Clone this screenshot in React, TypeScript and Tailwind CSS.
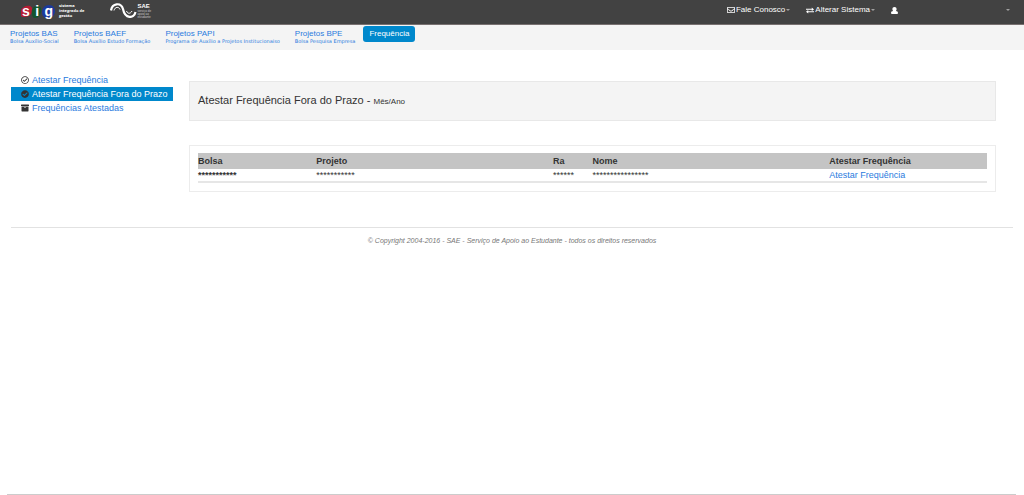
import { FaArchive, FaCheckCircle, FaRegCheckCircle, FaRegEnvelope } from "react-icons/fa";

const projects = [
  { title: "Projetos BAS", subtitle: "Bolsa Auxílio-Social" },
  { title: "Projetos BAEF", subtitle: "Bolsa Auxílio Estudo Formação" },
  { title: "Projetos PAPI", subtitle: "Programa de Auxílio a Projetos Institucionaiso" },
  { title: "Projetos BPE", subtitle: "Bolsa Pesquisa Empresa" },
];

const menu = [
  { label: "Atestar Frequência", icon: FaRegCheckCircle, active: false },
  { label: "Atestar Frequência Fora do Prazo", icon: FaCheckCircle, active: true },
  { label: "Frequências Atestadas", icon: FaArchive, active: false },
];

const columns = [
  { label: "Bolsa", width: "w-[15%]" },
  { label: "Projeto", width: "w-[30%]" },
  { label: "Ra", width: "w-[5%]" },
  { label: "Nome", width: "w-[30%]" },
  { label: "Atestar Frequência", width: "w-[20%]" },
];

const rows = [
  { bolsa: "***********", projeto: "***********", ra: "******", nome: "****************" },
];

function Caret() {
  return (
    <svg viewBox="0 0 4 2" className="ml-px h-[2px] w-1 fill-[#a0a0a0]" aria-hidden="true">
      <path d="M0 0h4L2 2z" />
    </svg>
  );
}

function SigLogo() {
  return (
    <a href="#" className="flex items-center gap-1 text-white">
      <span className="relative flex h-4 w-8 items-center">
        <svg viewBox="0 0 34 16" className="absolute inset-0 h-4 w-[34px]" aria-hidden="true">
          <path d="M-1 11C-1 6 3 2 9 3c2 1 3 3 2 6-1 3-4 5-8 5-3 0-4-1-4-3z" fill="#b81c34" />
          <path d="M11 11c-1-4 1-8 5-8 4 0 5 3 4 6-1 4-3 6-6 6-2 0-3-2-3-4z" fill="#14552f" />
          <path d="M21 9c0-4 3-7 7-7 4 0 6 3 6 6 0 4-3 7-7 7-4 0-6-2-6-6z" fill="#1c3a9c" />
        </svg>
        <span className="relative flex w-full justify-between pl-px text-[14px] leading-4 font-bold">
          <span>s</span>
          <span>i</span>
          <span>g</span>
        </span>
      </span>
      <span className="pl-[2px] font-['Open_Sans',sans-serif] text-[4px] leading-[5px] font-bold">
        sistema
        <br />
        integrado de
        <br />
        gestão
      </span>
    </a>
  );
}

function SaeLogo() {
  return (
    <a href="#" className="flex items-center text-white">
      <svg viewBox="0 0 27 15" className="h-[15px] w-[27px]" fill="none" stroke="currentColor" aria-hidden="true">
        <path d="M1 7.500C2 0 11-1 13 6c2 10 11 10 12.500 3" strokeWidth="2.200" />
        <path d="M4 7.500c1-4 5-4 6-1" strokeWidth="1" />
        <path d="M16.500 8c1 3 4 3 5.500 0" strokeWidth="1" />
      </svg>
      <span className="flex flex-col pt-px">
        <span className="text-[6px] leading-[7px] font-bold">SAE</span>
        <span className="text-[3px] leading-[3px] text-[#c8c8c8]">
          serviço de
          <br />
          apoio ao
          <br />
          estudante
        </span>
      </span>
    </a>
  );
}

function TopBar() {
  return (
    <header className="flex h-[25px] items-start border-b border-[#777070] bg-[#424242] pl-[21px] pr-[14px]">
      <div className="flex items-center gap-[26px] pt-[2px]">
        <SigLogo />
        <SaeLogo />
      </div>
      <div className="ml-auto flex items-center pt-1 text-[8px] leading-3 text-white">
        <button type="button" className="flex items-center">
          <FaRegEnvelope className="mr-px h-2 w-2" />
          Fale Conosco
          <Caret />
        </button>
        <button type="button" className="ml-4 flex items-center">
          <svg viewBox="0 0 18 14" className="mr-px h-[7px] w-2 fill-current" aria-hidden="true">
            <path d="M0 3h13V0l5 4.500L13 8V5.500H0zM18 11H5v3L0 10l5-4v2.500h13z" />
          </svg>
          Alterar Sistema
          <Caret />
        </button>
        <button type="button" aria-label="Usuário" className="ml-4 flex w-[119px] items-center justify-between">
          <svg viewBox="0 0 14 14" className="h-[7px] w-[7px] fill-current" aria-hidden="true">
            <path d="M7 0c2.600 0 4.200 1.600 4.200 4 0 2-.6 3-1.400 4C12.500 8 14 9.500 14 12c0 1.300-.7 2-2 2H2c-1.300 0-2-.7-2-2 0-2.500 1.500-4 4.200-4C3.400 7 2.800 6 2.800 4c0-2.400 1.600-4 4.200-4z" />
          </svg>
          <Caret />
        </button>
      </div>
    </header>
  );
}

function ProjectNav() {
  return (
    <nav className="flex h-[25px] items-start bg-[#f4f4f4] pl-[10px] pt-px">
      <ul className="flex gap-[15px] pt-1 text-[#2a7bde]">
        {projects.map((project) => (
          <li key={project.title}>
            <a href="#" className="block">
              <span className="block text-[8px] leading-2">{project.title}</span>
              <span className="block font-['DejaVu_Sans',sans-serif] text-[5px] leading-[6px]">
                {project.subtitle}
              </span>
            </a>
          </li>
        ))}
      </ul>
      <a href="#" className="ml-2 rounded-[3px] bg-[#0088cc] px-[6px] text-[8px] leading-4 text-white">
        Frequência
      </a>
    </nav>
  );
}

function SideMenu() {
  return (
    <ul className="w-[162px] shrink-0 text-[9px] leading-[14px]">
      {menu.map(({ label, icon: Icon, active }) => (
        <li key={label}>
          <a
            href="#"
            className={`flex items-center gap-[3px] pl-[10px] ${active ? "bg-[#0088cc] text-white" : "text-[#2a7bde]"}`}
          >
            <Icon className="h-2 w-2 text-[#333]" />
            {label}
          </a>
        </li>
      ))}
    </ul>
  );
}

export default function App() {
  return (
    <div className="flex min-h-screen flex-col bg-white font-['Liberation_Sans',Arial,sans-serif] text-[#333]">
      <TopBar />
      <ProjectNav />

      <div className="mx-[11px] flex gap-4 pt-[23px]">
        <SideMenu />
        <main className="mr-[17px] min-w-0 flex-1 pt-2">
          <div className="border border-[#e8e8e8] bg-[#f4f4f4] px-2 py-[10px]">
            <h1 className="text-[11px] leading-4">
              Atestar Frequência Fora do Prazo - <span className="text-[8px]">Mês/Ano</span>
            </h1>
          </div>

          <div className="mt-6 border border-[#ececec] px-2 pt-[7px] pb-2">
            <table className="w-full table-fixed border-b-2 border-[#e6e6e6] text-left text-[9px] leading-[12px]">
              <thead className="bg-[#c4c4c4]">
                <tr>
                  {columns.map((column) => (
                    <th key={column.label} className={`${column.width} px-0 py-[2px] font-bold`}>
                      {column.label}
                    </th>
                  ))}
                </tr>
              </thead>
              <tbody>
                {rows.map((row) => (
                  <tr key={row.bolsa}>
                    <td className="p-0 font-bold">{row.bolsa}</td>
                    <td className="p-0">{row.projeto}</td>
                    <td className="p-0">{row.ra}</td>
                    <td className="p-0">{row.nome}</td>
                    <td className="p-0">
                      <a href="#" className="text-[#2a7bde]">
                        Atestar Frequência
                      </a>
                    </td>
                  </tr>
                ))}
              </tbody>
            </table>
          </div>
        </main>
      </div>

      <footer className="mx-[11px] mt-[35px] border-t border-[#e2e2e2] pt-2 text-center text-[7px] leading-[10px] text-[#777] italic">
        © Copyright 2004-2016 - SAE - Serviço de Apoio ao Estudante - todos os direitos reservados
      </footer>

      <div className="mt-auto ml-[7px] mr-2 h-px bg-[#ccc]" />
    </div>
  );
}
